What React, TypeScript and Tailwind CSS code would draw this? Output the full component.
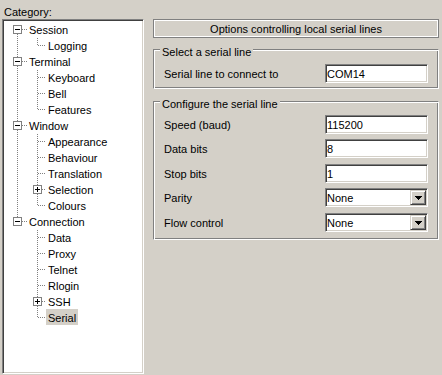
import React from 'react';

type TreeRow = {
  label: string;
  level: 0 | 1;
  box?: 'minus' | 'plus';
  up?: boolean;
  down?: boolean;
  rail?: boolean;
  selected?: boolean;
};

const rows: TreeRow[] = [
  { label: 'Session', level: 0, box: 'minus', down: true },
  { label: 'Logging', level: 1, rail: true, up: true },
  { label: 'Terminal', level: 0, box: 'minus', up: true, down: true },
  { label: 'Keyboard', level: 1, rail: true, up: true, down: true },
  { label: 'Bell', level: 1, rail: true, up: true, down: true },
  { label: 'Features', level: 1, rail: true, up: true },
  { label: 'Window', level: 0, box: 'minus', up: true, down: true },
  { label: 'Appearance', level: 1, rail: true, up: true, down: true },
  { label: 'Behaviour', level: 1, rail: true, up: true, down: true },
  { label: 'Translation', level: 1, rail: true, up: true, down: true },
  { label: 'Selection', level: 1, box: 'plus', rail: true, up: true, down: true },
  { label: 'Colours', level: 1, rail: true, up: true },
  { label: 'Connection', level: 0, box: 'minus', up: true },
  { label: 'Data', level: 1, up: true, down: true },
  { label: 'Proxy', level: 1, up: true, down: true },
  { label: 'Telnet', level: 1, up: true, down: true },
  { label: 'Rlogin', level: 1, up: true, down: true },
  { label: 'SSH', level: 1, box: 'plus', up: true, down: true },
  { label: 'Serial', level: 1, up: true, selected: true },
];

// dotted line, one pixel on / one off
const dots = (x1: number, y1: number, x2: number, y2: number) => {
  const out: React.ReactNode[] = [];
  for (let x = x1; x <= x2; x++) {
    for (let y = y1; y <= y2; y++) {
      if ((x + y) % 2 === 0) out.push(<rect key={`${x}-${y}`} x={x} y={y} width={1} height={1} fill="#808080" />);
    }
  }
  return out;
};

const Lines: React.FC<{ row: TreeRow }> = ({ row }) => {
  const cx = row.level === 0 ? 13 : 33;
  const width = row.level === 0 ? 23 : 42;
  const hasBox = !!row.box;
  return (
    <svg width={width} height={16} className="shrink-0" shapeRendering="crispEdges">
      {row.rail && dots(13, 0, 13, 15)}
      {row.up && dots(cx, 0, cx, hasBox ? 3 : 8)}
      {row.down && dots(cx, hasBox ? 13 : 8, cx, 15)}
      {dots(hasBox ? cx + 5 : cx + 1, 8, width - 1, 8)}
      {hasBox && (
        <g>
          <rect x={cx - 4} y={4.5} width={8} height={8} fill="#fff" stroke="#808080" />
          <rect x={cx - 2} y={8} width={5} height={1} fill="#000" />
          {row.box === 'plus' && <rect x={cx} y={6} width={1} height={5} fill="#000" />}
        </g>
      )}
    </svg>
  );
};

const sunken = 'border border-t-[#808080] border-l-[#808080] border-r-white border-b-white shadow-[inset_1px_1px_0_#404040,inset_-1px_-1px_0_#d4d0c8]';
const etched = 'border border-t-[#808080] border-l-[#808080] border-r-white border-b-white shadow-[inset_1px_1px_0_#fff,inset_-1px_-1px_0_#808080]';

const Group: React.FC<{ title: string; className?: string; children: React.ReactNode }> = ({ title, className, children }) => (
  <div className={`${etched} ${className}`}>
    <div className="-mt-[4px] ml-[6px] w-fit px-[2px] bg-[#d4d0c8] leading-[13px]">{title}</div>
    {children}
  </div>
);

const Field: React.FC<{ label: string; className?: string; children: React.ReactNode }> = ({ label, className, children }) => (
  <div className={`flex items-center h-[19px] pl-[10px] pr-[10px] ${className}`}>
    <span className="flex-1 leading-[13px] pt-[1px]">{label}</span>
    {children}
  </div>
);

const Edit: React.FC<{ value: string }> = ({ value }) => (
  <div className={`w-[103px] h-[19px] bg-white ${sunken} flex items-center pl-[1px] pt-[1px] leading-[13px]`}>{value}</div>
);

const Combo: React.FC<{ value: string }> = ({ value }) => (
  <div className={`w-[103px] h-[19px] bg-white ${sunken} flex items-stretch py-[1px] pr-[1px]`}>
    <span className="flex-1 flex items-center pl-[1px] pt-[1px] leading-[13px]">{value}</span>
    <div className="w-[16px] h-[15px] bg-[#d4d0c8] border border-t-[#d4d0c8] border-l-[#d4d0c8] border-r-[#404040] border-b-[#404040] shadow-[inset_1px_1px_0_#fff,inset_-1px_-1px_0_#808080] flex items-center justify-center">
      <svg width={7} height={4} shapeRendering="crispEdges">
        <rect x={0} y={0} width={7} height={1} fill="#000" />
        <rect x={1} y={1} width={5} height={1} fill="#000" />
        <rect x={2} y={2} width={3} height={1} fill="#000" />
        <rect x={3} y={3} width={1} height={1} fill="#000" />
      </svg>
    </div>
  </div>
);

export default function App() {
  return (
    <div className="w-[442px] h-[375px] bg-[#d4d0c8] text-black text-[11px] font-['Liberation_Sans',Arial,sans-serif] flex overflow-hidden">
      {/* Category tree */}
      <div className="ml-[2px] w-[142px] flex flex-col">
        <div className="h-[19px] pt-[6px] pl-[2px] leading-[13px]">Category:</div>
        <div className={`h-[355px] bg-white ${sunken} pt-[1px] pl-[1px] overflow-hidden`}>
          {rows.map((row) => (
            <div key={row.label} className="flex h-[16px]">
              <Lines row={row} />
              <span className={`px-[2px] h-[16px] leading-[16px] pt-[1px] whitespace-nowrap ${row.selected ? 'bg-[#d4d0c8]' : ''}`}>{row.label}</span>
            </div>
          ))}
        </div>
      </div>

      {/* Serial panel */}
      <div className="ml-[9px] w-[286px] pt-[19px] flex flex-col">
        <div className="h-[19px] border border-[#808080] shadow-[inset_1px_1px_0_#fff,inset_-1px_-1px_0_#fff] flex items-center justify-center pt-[1px] leading-[13px]">
          Options controlling local serial lines
        </div>

        <Group title="Select a serial line" className="mt-[11px] h-[40px]">
          <Field label="Serial line to connect to" className="mt-[5px]">
            <Edit value="COM14" />
          </Field>
        </Group>

        <Group title="Configure the serial line" className="mt-[12px] h-[139px]">
          <Field label="Speed (baud)" className="mt-[4px]">
            <Edit value="115200" />
          </Field>
          <Field label="Data bits" className="mt-[5px]">
            <Edit value="8" />
          </Field>
          <Field label="Stop bits" className="mt-[6px]">
            <Edit value="1" />
          </Field>
          <Field label="Parity" className="mt-[5px]">
            <Combo value="None" />
          </Field>
          <Field label="Flow control" className="mt-[6px]">
            <Combo value="None" />
          </Field>
        </Group>
      </div>
    </div>
  );
}
